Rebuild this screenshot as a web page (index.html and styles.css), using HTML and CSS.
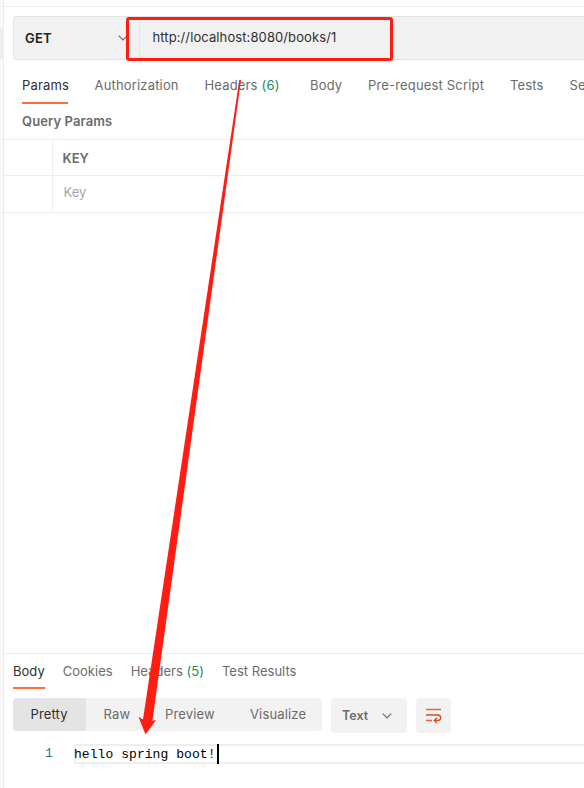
FILE: index.html
```html
<!DOCTYPE html>
<html lang="en">
<head>
<meta charset="utf-8">
<title>API request</title>
<link rel="stylesheet" href="styles.css">
</head>
<body>
<div class="app">
  <aside class="rail"><div class="rail-mark"></div></aside>
  <main class="main">
    <section class="request">
      <div class="url-bar">
        <div class="method"><span>GET</span>
          <svg class="chevron" width="10" height="6" viewBox="0 0 10 6"><path d="M.7.7 5 5 9.3.7"/></svg>
        </div>
        <div class="url">http://localhost:8080/books/1</div>
      </div>
      <nav class="tabs">
        <span class="tab active params">Params</span>
        <span class="tab auth">Authorization</span>
        <span class="tab headers">Headers <b>(6)</b></span>
        <span class="tab body">Body</span>
        <span class="tab script">Pre-request Script</span>
        <span class="tab tests">Tests</span>
        <span class="tab">Se</span>
      </nav>
      <h2 class="query-title">Query Params</h2>
      <div class="grid">
        <div class="row head"><div class="check"></div><div class="cell">KEY</div></div>
        <div class="row entry"><div class="check"></div><div class="cell">Key</div></div>
      </div>
    </section>
    <section class="response">
      <nav class="tabs response-tabs">
        <span class="tab active">Body</span>
        <span class="tab cookies">Cookies</span>
        <span class="tab">Headers <b>(5)</b></span>
        <span class="tab">Test Results</span>
      </nav>
      <div class="toolbar">
        <div class="segments">
          <span class="seg on">Pretty</span><span class="seg raw">Raw</span><span class="seg preview">Preview</span><span class="seg visualize">Visualize</span>
        </div>
        <div class="format"><span>Text</span>
          <svg class="chevron" width="10" height="6" viewBox="0 0 10 6"><path d="M.7.7 5 5 9.3.7"/></svg>
        </div>
        <div class="wrap">
          <svg width="17" height="17" viewBox="0 0 17 17"><path class="soft" d="M1 2.5h15M1 13.5h6"/><path d="M1 8h11.9a2.75 2.75 0 0 1 0 5.5H9.4M12 10.7l-2.8 2.8 2.6 2.6"/></svg>
        </div>
      </div>
      <div class="editor">
        <div class="line-no">1</div>
        <div class="code"><span>hello spring boot!</span><i class="caret"></i></div>
      </div>
    </section>
  </main>
  <div class="url-highlight"></div>
  <svg class="arrow" width="584" height="788" viewBox="0 0 584 788"><path d="M239.3 80h1.7L152.4 720.8l3.6-.8L145.5 734.5 138.5 716.8l4.5 2.7z"/></svg>
</div>
</body>
</html>
```
FILE: styles.css
```css
* { box-sizing: border-box; }
body { margin: 0; background: #fff; font: 13px/20px Inter, "Liberation Sans", sans-serif; color: #6b6b6b; }
.app { position: relative; display: flex; width: 584px; height: 788px; overflow: hidden; }
.rail { flex: none; width: 4px; padding-top: 28px; background: #f9f9f9; border-right: 1px solid #ededed; }
.rail-mark { height: 31px; background: #ededed; }
.main { flex: 1; min-width: 0; display: flex; flex-direction: column; padding-top: 6px; }
.request { height: 647px; border-top: 1px solid #ededed; padding-top: 9px; }
.url-bar { display: flex; height: 44px; margin-left: 9px; background: #f1f1f1; border: 1px solid #e3e3e3; border-right: 0; border-radius: 4px 0 0 4px; }
.method { display: flex; align-items: center; justify-content: space-between; width: 126px; padding: 0 11px 0 11px; border-right: 1px solid #e3e3e3; color: #212121; font-weight: 600; letter-spacing: .2px; }
.url { padding: 10px 0 0 12.5px; color: #303030; letter-spacing: .1px; }
.chevron { fill: none; stroke: #6b6b6b; stroke-width: 1.2; }
.tabs { display: flex; white-space: nowrap; letter-spacing: .17px; }
.request .tabs { margin: 15px 0 0 18px; height: 29px; }
.tab { flex: none; height: 29px; }
.tab.active { color: #303030; border-bottom: 2px solid #ff6c37; }
.tab b { color: #218a62; font-weight: 400; }
.params { width: 46px; margin-right: 26.5px; }
.auth { width: 110px; }
.headers { width: 105.5px; }
.body { width: 58px; }
.script { width: 142px; }
.tests { width: 59.5px; }
.query-title { margin: 7px 0 8px 18px; font-size: 13px; line-height: 20px; font-weight: 600; letter-spacing: .1px; }
.grid { border-top: 1px solid #ededed; }
.row { display: flex; border-bottom: 1px solid #ededed; }
.check { flex: none; width: 49px; border-right: 1px solid #ededed; }
.head { height: 36px; }
.head .cell { padding: 8px 9.5px; font-weight: 600; }
.entry { height: 37px; }
.entry .check { height: 35px; }
.entry .cell { padding: 6px 10.5px; color: #a6a6a6; }
.response { flex: 1; border-top: 1px solid #ededed; padding: 7px 0 0 9px; }
.response-tabs { gap: 18px; height: 28px; letter-spacing: .02px; }
.response-tabs .tab { height: 28px; }
.toolbar { display: flex; align-items: flex-start; gap: 9px; margin-top: 9px; }
.segments { display: flex; width: 309px; height: 33px; overflow: hidden; border-radius: 4px; background: #f2f2f2; line-height: 33px; letter-spacing: .15px; }
.seg.on { width: 73px; padding-left: 17.5px; background: #e4e4e4; color: #303030; }
.raw { width: 62px; padding-left: 17.5px; }
.preview { width: 85px; padding-left: 17px; }
.visualize { padding-left: 17px; }
.format { display: flex; align-items: center; justify-content: space-between; width: 76px; height: 35px; padding: 0 15px 0 11px; border-radius: 4px; background: #f2f2f2; font-weight: 600; font-size: 12.5px; }
.wrap { display: grid; place-items: center; width: 35px; height: 35px; border-radius: 4px; background: #f2f2f2; }
.wrap svg { fill: none; stroke: #d94a1e; stroke-width: 1.3; }
.wrap .soft { stroke: #e2673f; }
.editor { display: flex; margin-top: 11px; font: 13px/20px "Liberation Mono", monospace; }
.line-no { width: 61px; padding-left: 32px; color: #237893; }
.code { display: flex; flex: 1; height: 20px; border: 2px solid #eee; border-right: 0; color: #000; line-height: 17px; white-space: pre; letter-spacing: .06px; }
.code span { margin-left: -2px; }
.caret { width: 2px; height: 20px; margin: -2px 0 0 1.5px; background: #000; }
.url-highlight { position: absolute; left: 126px; top: 17px; width: 267px; height: 44px; border: 3px solid #ff1d12; border-radius: 3px; }
.arrow { position: absolute; left: 0; top: 0; fill: #ff1d12; }
```
